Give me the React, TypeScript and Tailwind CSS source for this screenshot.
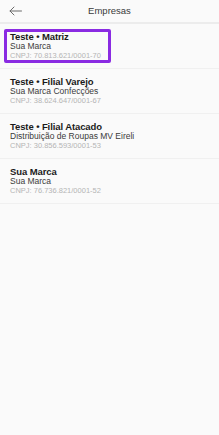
import React from "react";

const items = [
  { title: "Teste • Matriz", sub: "Sua Marca", cnpj: "CNPJ: 70.813.621/0001-70", selected: true },
  { title: "Teste • Filial Varejo", sub: "Sua Marca Confecções", cnpj: "CNPJ: 38.624.647/0001-67" },
  { title: "Teste • Filial Atacado", sub: "Distribuição de Roupas MV Eireli", cnpj: "CNPJ: 30.856.593/0001-53" },
  { title: "Sua Marca", sub: "Sua Marca", cnpj: "CNPJ: 76.736.821/0001-52" },
];

export default function App() {
  return (
    <div
      className="w-[219px] h-[435px] bg-[#fafafa] flex flex-col"
      style={{ fontFamily: '"Liberation Sans", Arial, sans-serif' }}
    >
      <div className="h-[24px] bg-[#fafafa] border-b-2 border-[#ececec] relative flex items-center justify-center shrink-0">
        <svg className="absolute left-[9px] top-[6px]" width="13" height="10" viewBox="0 0 13 10" fill="none">
          <path d="M12.5 5H1M5 1L1 5l4 4" stroke="#6b6b6b" strokeWidth="1" strokeLinecap="round" strokeLinejoin="round" />
        </svg>
        <span className="text-[9.5px] text-[#3a3a3a] leading-none">Empresas</span>
      </div>
      <div className="flex flex-col">
        {items.map((it, i) => (
          <div key={i} className="h-[45px] border-b border-[#f0f0f0] px-[4px] flex items-center">
            <div
              className={
                it.selected
                  ? "w-[107px] h-[34px] border-[3px] border-[#8a2be2] rounded-[2px] pl-[3px] flex flex-col justify-center"
                  : "h-[34px] pl-[6px] flex flex-col justify-center"
              }
            >
              <div className="text-[9.5px] font-bold text-[#1a1a1a] leading-[10px] whitespace-nowrap tracking-[-0.1px]">{it.title}</div>
              <div className="text-[8.5px] text-[#3a3a3a] leading-[9px] whitespace-nowrap">{it.sub}</div>
              <div className="text-[7.5px] text-[#b5b5b5] leading-[9px] whitespace-nowrap">{it.cnpj}</div>
            </div>
          </div>
        ))}
      </div>
    </div>
  );
}
